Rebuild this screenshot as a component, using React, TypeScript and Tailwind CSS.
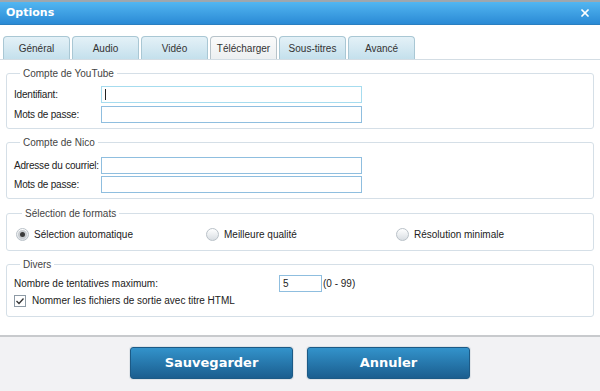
import { X } from 'lucide-react'

const tabs = ['Général', 'Audio', 'Vidéo', 'Télécharger', 'Sous-titres', 'Avancé']

function Field({ label, focused }: { label: string; focused?: boolean }) {
  return (
    <div className="flex items-center h-[17px]">
      <span className="w-[87px] shrink-0 whitespace-nowrap tracking-[-0.2px]">{label}</span>
      <div
        className={`w-[261px] h-[17px] border bg-white flex items-center pl-[3px] ${
          focused ? 'border-[#a6dcef]' : 'border-[#8fbedf]'
        }`}
      >
        {focused && <span className="w-px h-[11px] bg-[#222]" />}
      </div>
    </div>
  )
}

function Group({ title, children, className = '' }: { title: string; children: React.ReactNode; className?: string }) {
  return (
    <fieldset className={`border border-[#d5dfe7] rounded-[3px] px-[7px] ${className}`}>
      <legend className="ml-[6px] px-[3px] leading-[13px] text-[#444]">{title}</legend>
      {children}
    </fieldset>
  )
}

function Radio({ label, checked }: { label: string; checked?: boolean }) {
  return (
    <div className="flex items-center w-[190px]">
      <span className="w-[13px] h-[13px] rounded-full border border-[#b9c1c8] bg-gradient-to-b from-[#ffffff] to-[#d9dee3] flex items-center justify-center">
        {checked && <span className="w-[5px] h-[5px] rounded-full bg-[#3a3a3a] ring-2 ring-[#c8ccd0]" />}
      </span>
      <span className="ml-[5px]">{label}</span>
    </div>
  )
}

export default function App() {
  return (
    <div className="w-[600px] h-[391px] flex flex-col bg-white text-[10px] text-[#222] font-['Liberation_Sans',Arial,sans-serif] overflow-hidden whitespace-nowrap">
      {/* Title bar */}
      <div className="h-[25px] border-t-2 border-[#9ea7ae] bg-gradient-to-b from-[#52b6f1] to-[#2a8ad5] border-b border-b-[#2a7fc0] flex items-center justify-between pl-[6px] pr-[9px]">
        <span className="font-['DejaVu_Sans',sans-serif] font-bold text-[11px] text-white">Options</span>
        <X className="h-[12px] w-[12px] text-white" strokeWidth={3.5} />
      </div>

      {/* Tabs */}
      <div className="pt-[11px] px-[3px] flex gap-[2px] border-b border-[#d3dde4]">
        {tabs.map((t) => (
          <div
            key={t}
            className={`w-[67px] h-[23px] rounded-t-[4px] border border-b-0 flex items-center justify-center text-[#333] ${
              t === 'Télécharger'
                ? 'border-[#b7c3ca] bg-gradient-to-b from-[#fbfbfb] to-[#eceff1]'
                : 'border-[#a9c7d4] bg-gradient-to-b from-[#e4f1f7] to-[#c4e0ec]'
            }`}
          >
            {t}
          </div>
        ))}
      </div>

      {/* Content */}
      <div className="flex-1 px-[6px] pt-[7px] flex flex-col">
        <Group title="Compte de YouTube" className="pt-[6px] pb-[5px]">
          <div className="flex flex-col gap-[3px]">
            <Field label="Identifiant:" focused />
            <Field label="Mots de passe:" />
          </div>
        </Group>

        <Group title="Compte de Nico" className="mt-[7px] pt-[8px] pb-[5px]">
          <div className="flex flex-col gap-[2px]">
            <Field label="Adresse du courriel:" />
            <Field label="Mots de passe:" />
          </div>
        </Group>

        <Group title="Sélection de formats" className="mt-[8px] pt-[7px] pb-[8px] pl-[9px]">
          <div className="flex">
            <Radio label="Sélection automatique" checked />
            <Radio label="Meilleure qualité" />
            <Radio label="Résolution minimale" />
          </div>
        </Group>

        <Group title="Divers" className="mt-[7px] pt-[4px] pb-[8px]">
          <div className="flex items-center h-[17px]">
            <span className="w-[265px] shrink-0">Nombre de tentatives maximum:</span>
            <div className="w-[43px] h-[17px] border border-[#8fbedf] flex items-center pl-[3px]">5</div>
            <span className="ml-[1px]">(0 - 99)</span>
          </div>
          <div className="flex items-center mt-[1px]">
            <span className="w-[12px] h-[12px] border border-[#8d9aa5] bg-white flex items-center justify-center">
              <svg width="10" height="10" viewBox="0 0 10 10">
                <path d="M1.5 5 L4 7.5 L8.5 2.5" stroke="#333" strokeWidth="1.3" fill="none" />
              </svg>
            </span>
            <span className="ml-[6px]">Nommer les fichiers de sortie avec titre HTML</span>
          </div>
        </Group>
      </div>

      {/* Footer */}
      <div className="h-[56px] border-t-2 border-[#c8cacd] bg-[#f2f2f4] flex items-center justify-center gap-[14px] pb-[2px]">
        {['Sauvegarder', 'Annuler'].map((b) => (
          <button
            key={b}
            className="w-[163px] h-[32px] rounded-[3px] border border-[#1c5a86] bg-gradient-to-b from-[#3393cb] to-[#1b5e8f] shadow-[0_0_0_1px_#dfe3e7] text-white font-['DejaVu_Sans',sans-serif] font-bold text-[13px]"
          >
            {b}
          </button>
        ))}
      </div>
    </div>
  )
}
